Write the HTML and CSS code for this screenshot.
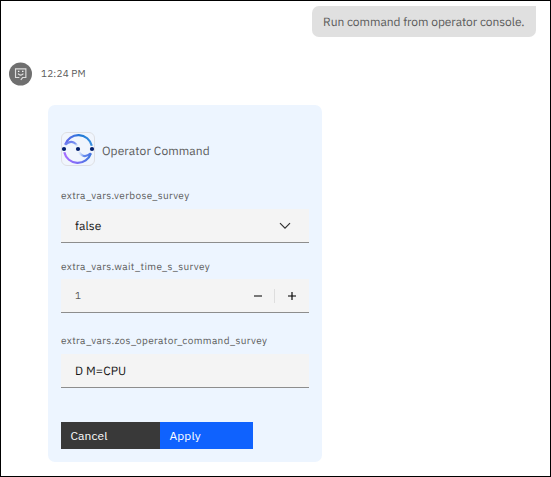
FILE: index.html
```html
<!DOCTYPE html>
<html lang="en">
<head>
<meta charset="utf-8">
<title>Operator Command</title>
<link rel="stylesheet" href="styles.css">
</head>
<body>
<main class="chat">
  <div class="bubble"><span class="bubble-text">Run command from operator console.</span></div>
  <div class="reply-meta">
    <svg class="avatar" viewBox="0 0 24 24" aria-hidden="true">
      <circle cx="12" cy="12" r="12" fill="#6f6f6f"/>
      <path d="M10.8 15.7H6.8V6.6H17.6V15.7H14.2L12.3 18.2" fill="none" stroke="#dedede" stroke-width="1.2"/>
      <path d="M9.3 8.5h1.5V10H9.3zM13.6 8.5h1.5V10h-1.5z" fill="#f4f4f4"/>
      <path d="M9.4 11.7Q12.2 14.6 15 11.7" fill="none" stroke="#e8e8e8" stroke-width="1.2"/>
    </svg>
    <time class="time">12:24 PM</time>
  </div>
  <form class="card">
    <header class="card-head">
      <svg class="logo" viewBox="0 0 34 34" aria-hidden="true">
        <defs>
          <linearGradient id="top" x1="0" y1="0" x2="1" y2="0"><stop offset="0" stop-color="#6969ee"/><stop offset=".6" stop-color="#1d78d5"/><stop offset="1" stop-color="#398fe0"/></linearGradient>
          <linearGradient id="bottom" x1="0" y1="0" x2="1" y2="0"><stop offset="0" stop-color="#a66cff"/><stop offset=".5" stop-color="#7b6df5"/><stop offset="1" stop-color="#3979db"/></linearGradient>
          <linearGradient id="fadeA" x1="0" y1="0" x2="1" y2="1"><stop offset="0" stop-color="#6673ec"/><stop offset=".6" stop-color="#7995f1"/><stop offset="1" stop-color="#b5cdfa" stop-opacity=".1"/></linearGradient>
          <linearGradient id="fadeB" x1="0" y1="0" x2="1" y2="0"><stop offset="0" stop-color="#a9c8fa" stop-opacity=".2"/><stop offset=".4" stop-color="#668cef"/><stop offset="1" stop-color="#4c70e2"/></linearGradient>
        </defs>
        <rect x=".5" y=".5" width="33" height="33" rx="5.5" fill="#f0f5fd" stroke="#dedfe3"/>
        <g fill="none" stroke-width="2.2">
          <path d="M4.2 12.7A13.8 13.8 0 0 1 30.8 13.8" stroke="url(#top)"/>
          <path d="M3.3 20.2A13.8 13.8 0 0 0 29.9 21.3" stroke="url(#bottom)"/>
          <path d="M4.2 12.7C7 10 10 9.2 12.7 10.4Q15 11.4 16.4 14.2" stroke="url(#fadeA)"/>
          <path d="M17.8 19.8Q19.2 22.6 21.5 23.6C24.2 24.7 27 23.9 29.9 21.3" stroke="url(#fadeB)"/>
        </g>
        <g fill="#001d6c"><circle cx="3" cy="17" r="2.1"/><circle cx="17" cy="17" r="2.1"/><circle cx="31" cy="17" r="2.1"/></g>
      </svg>
      <h1 class="title">Operator Command</h1>
    </header>
    <section class="field">
      <label class="label verbose">extra_vars.verbose_survey</label>
      <div class="control">
        <span class="value false">false</span>
        <svg class="chevron" viewBox="0 0 12 8" aria-hidden="true"><path d="M1 1.2L6 6.2L11 1.2" fill="none" stroke="#303030" stroke-width="1.2"/></svg>
      </div>
    </section>
    <section class="field wait-field">
      <label class="label wait">extra_vars.wait_time_s_survey</label>
      <div class="control">
        <span class="value number">1</span>
        <svg class="stepper" viewBox="0 0 46 14" aria-hidden="true">
          <path d="M1 6h8v2H1zM35 6h8v2h-8z" fill="#777"/>
          <path d="M38 3h2v8h-2z" fill="#686868"/><path d="M38 6h2v2h-2z" fill="#333"/>
          <path d="M21 0h1v14h-1z" fill="#dedede"/>
        </svg>
      </div>
    </section>
    <section class="field command-field">
      <label class="label command">extra_vars.zos_operator_command_survey</label>
      <div class="control"><span class="value cpu">D M=CPU</span></div>
    </section>
    <footer class="actions">
      <button class="btn cancel" type="button">Cancel</button>
      <button class="btn apply" type="button">Apply</button>
    </footer>
  </form>
</main>
</body>
</html>
```

FILE: styles.css
```css
* { box-sizing: border-box; }
body {
  margin: 0;
  font-family: "IBM Plex Sans", Roboto, "Liberation Sans", sans-serif;
  color: #5c5c5c;
  text-rendering: geometricPrecision;
}
.chat {
  width: 551px;
  height: 477px;
  border: 1px solid #000;
  background: #fff;
  padding: 5px 14px 0 8px;
  overflow: hidden;
}
.bubble {
  width: 224px;
  height: 31px;
  margin-left: auto;
  padding: 1px 0 0 11px;
  border-radius: 7px 0 7px 7px;
  background: #e0e0e0;
  font-size: 12px;
  line-height: 31px;
  white-space: nowrap;
}
.bubble-text { letter-spacing: -.05px; }
.reply-meta {
  display: flex;
  align-items: center;
  gap: 9px;
  height: 24px;
  margin-top: 25px;
}
.avatar { width: 23px; height: 24px; }
.time { margin-top: -2px; font-size: 10px; letter-spacing: .18px; }
.card {
  width: 274px;
  height: 357px;
  margin: 19px 0 0 39px;
  padding: 27px 13px 0;
  border-radius: 7px;
  background: #edf5ff;
}
.card-head { display: flex; gap: 7px; height: 34px; }
.logo { width: 34px; height: 34px; }
.title {
  margin: 4px 0 0;
  font-size: 12px;
  font-weight: 400;
  line-height: 32px;
  letter-spacing: .1px;
}
.field { margin-top: 22px; }
.wait-field { margin-top: 16px; }
.command-field { margin-top: 20px; }
.label {
  display: block;
  height: 21px;
  font-size: 10px;
  line-height: 16px;
  letter-spacing: .38px;
  white-space: nowrap;
}
.wait { height: 20px; }
.control {
  display: flex;
  align-items: center;
  height: 34px;
  padding: 0 14px;
  background: #f4f4f4;
  border-bottom: 1px solid #8d8d8d;
}
.value { padding-top: 2px; font-size: 12px; letter-spacing: .08px; color: #161616; }
.number { padding-top: 0; font-size: 10px; color: #5c5c5c; }
.chevron { width: 12px; height: 8px; margin-left: auto; margin-right: 4px; }
.stepper { width: 46px; height: 14px; margin-left: auto; margin-right: -4px; }
.actions { display: flex; margin-top: 34px; }
.btn {
  height: 27px;
  padding: 0 0 0 9.5px;
  border: 0;
  font: inherit;
  font-size: 12px;
  letter-spacing: .1px;
  text-align: left;
  color: #fff;
}
.cancel { width: 99px; background: #393939; }
.apply { width: 93px; background: #0f62fe; }
```
